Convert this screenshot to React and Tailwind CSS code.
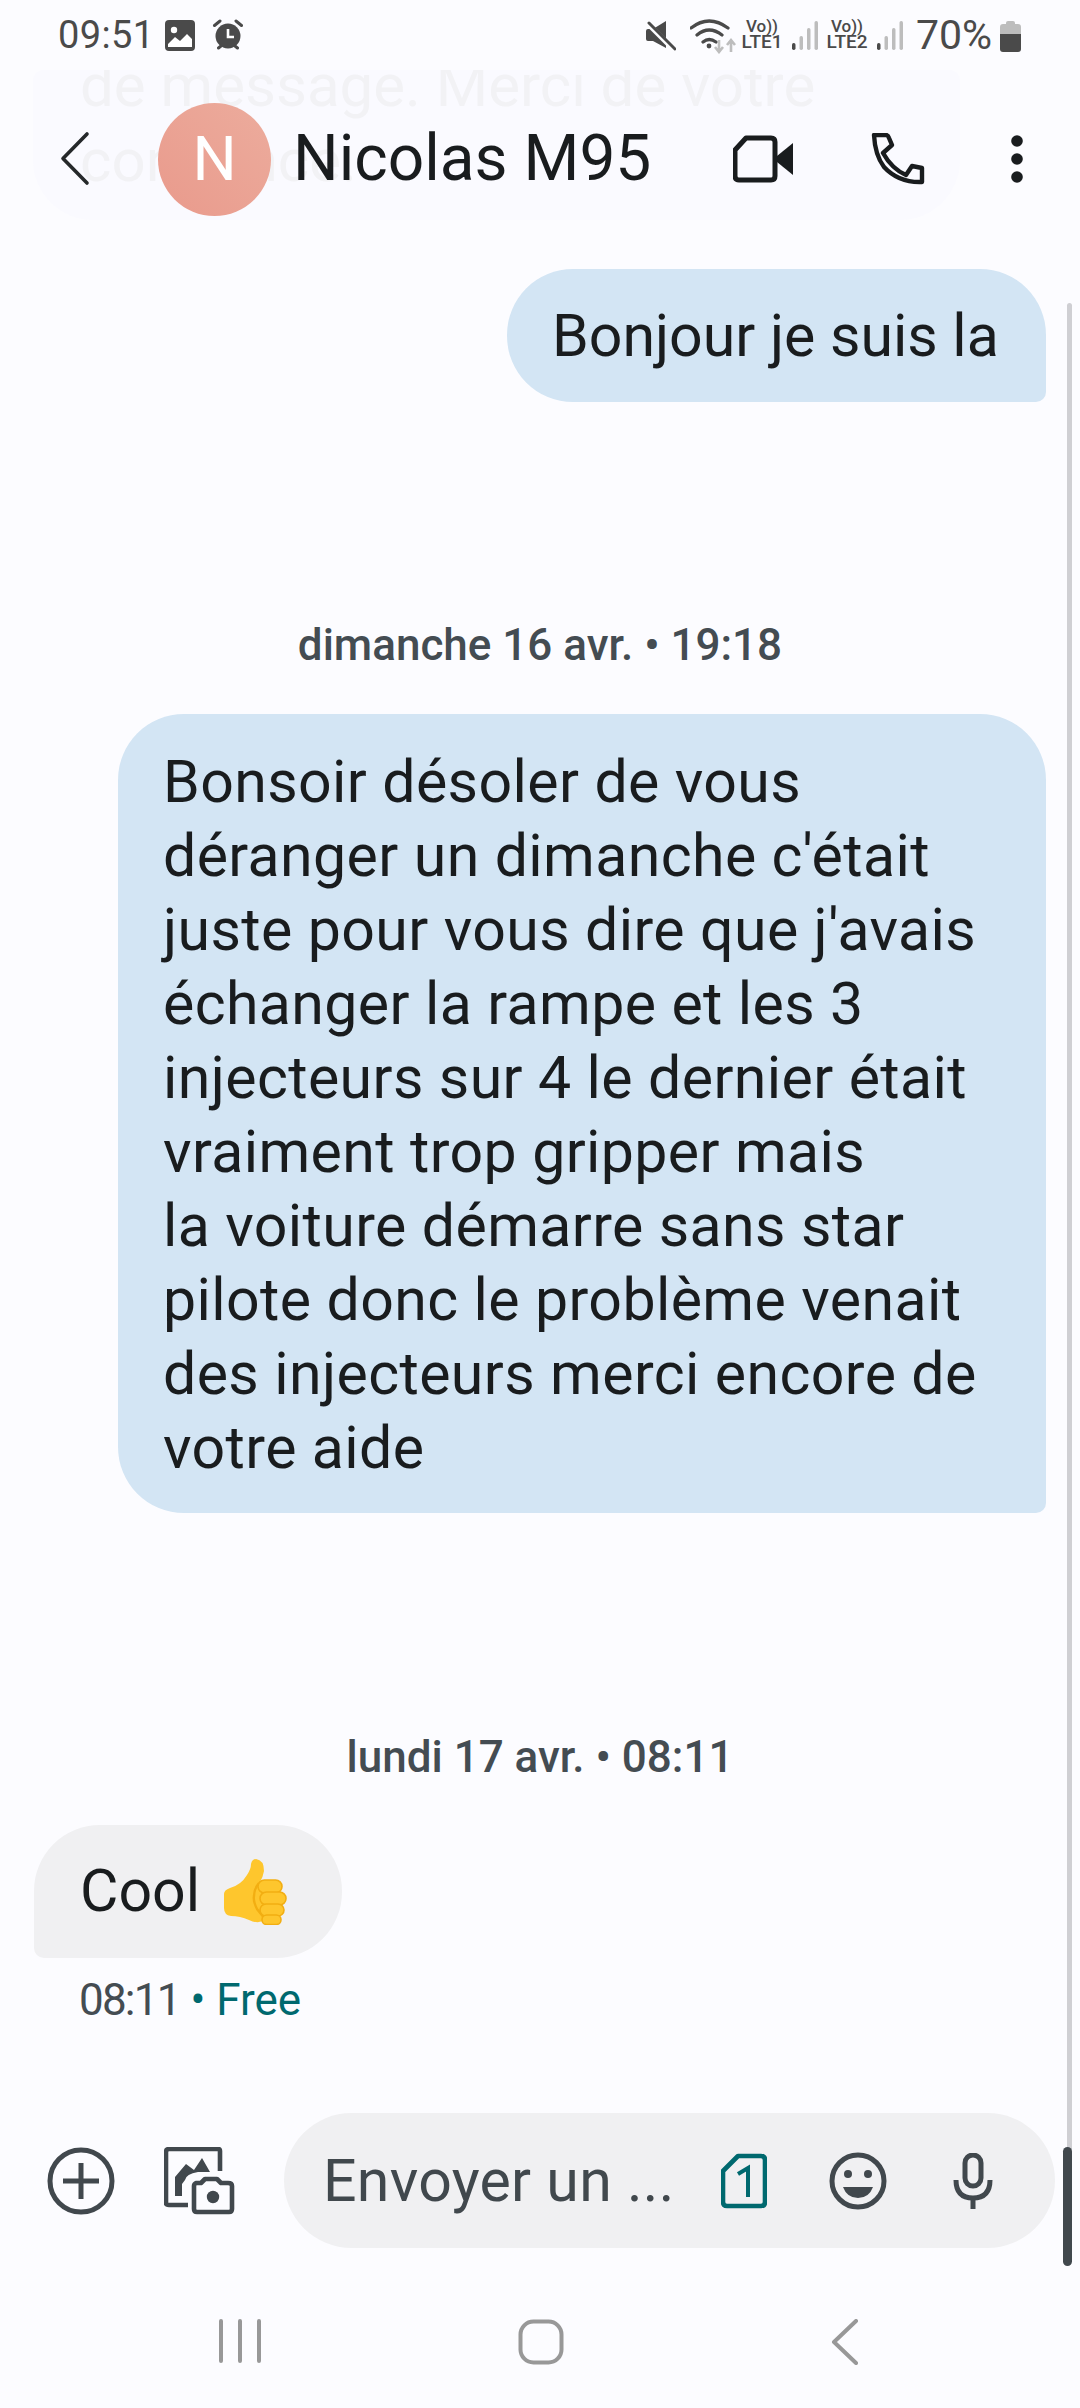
const font = { fontFamily: '"Roboto","Noto Sans",sans-serif' };

function Signal() {
  return (
    <svg width="26" height="30" viewBox="0 0 26 30" className="shrink-0">
      <rect x="0" y="22" width="3.5" height="7" rx="1.7" fill="#4a4a4a" />
      <rect x="7.5" y="15" width="3.5" height="14" rx="1.7" fill="#bdbdbd" />
      <rect x="15" y="7" width="3.5" height="22" rx="1.7" fill="#bdbdbd" />
      <rect x="22.5" y="0" width="3.5" height="29" rx="1.7" fill="#bdbdbd" />
    </svg>
  );
}

function Lte({ n }) {
  return (
    <div className="w-[40px] shrink-0 flex flex-col items-center text-[#4a4a4a] font-medium">
      <span className="text-[17px] leading-[15px] h-[15px]">Vo))</span>
      <span className="text-[19px] leading-[16px] h-[16px]">LTE{n}</span>
    </div>
  );
}

function StatusBar() {
  return (
    <div className="h-[70px] shrink-0 flex items-start pt-[18px] pl-[58px] pr-[59px] text-[#4a4a4a]">
      <span className="text-[38px] leading-[34px] w-[107px] shrink-0 tracking-[0.4px]">09:51</span>
      <svg width="30" height="31" viewBox="0 0 30 31" className="shrink-0 mt-[2px]">
        <rect width="30" height="31" rx="4" fill="#4a4a4a" />
        <circle cx="9" cy="10" r="3.2" fill="#fff" />
        <path d="M3 24 L10 17 L15 21 L22 14 L27 19 V27 H3 Z" fill="#fff" />
      </svg>
      <svg width="32" height="32" viewBox="0 0 32 32" className="shrink-0 ml-[17px] mt-[1px]">
        <circle cx="16" cy="17" r="12.5" fill="#4a4a4a" />
        <path d="M2.5 6.5 L8 2 M29.5 6.5 L24 2 M6.5 29 L9 27 M25.5 29 L23 27" stroke="#4a4a4a" strokeWidth="3" strokeLinecap="round" />
        <path d="M16 10 V18 H22" stroke="#fff" strokeWidth="2.6" fill="none" />
      </svg>
      <div className="flex-1" />
      <svg width="30" height="32" viewBox="0 0 30 32" className="shrink-0 mt-[2px]">
        <path d="M0 11 Q0 9 2 9 H7 L20 1 V28 L7 21 H2 Q0 21 0 19 Z" fill="#4a4a4a" />
        <path d="M1 3 L28 30" stroke="#fdfdff" strokeWidth="5" />
        <path d="M3 3 L29 29" stroke="#4a4a4a" strokeWidth="3" strokeLinecap="round" />
      </svg>
      <svg width="46" height="36" viewBox="0 0 46 36" className="shrink-0 ml-[14px]">
        <path d="M1 10 Q19 -4 38 10 M7 17 Q19 7 32 17 M13 24 Q19 19 26 24" stroke="#4a4a4a" strokeWidth="3.2" fill="none" strokeLinecap="round" />
        <circle cx="19" cy="28" r="2.4" fill="#4a4a4a" />
        <path d="M29 22 V33 M25 29 L29 34 L33 29" stroke="#bdbdbd" strokeWidth="2.6" fill="none" />
        <path d="M41 34 V23 M37 27 L41 22 L45 27" stroke="#bdbdbd" strokeWidth="2.6" fill="none" />
      </svg>
      <div className="ml-[6px] mt-[1px] flex gap-[10px]">
        <Lte n="1" />
        <div className="mt-[2px]"><Signal /></div>
      </div>
      <div className="ml-[9px] mt-[1px] flex gap-[10px]">
        <Lte n="2" />
        <div className="mt-[2px]"><Signal /></div>
      </div>
      <span className="text-[41px] leading-[34px] ml-[13px] w-[84px] shrink-0">70%</span>
      <svg width="21" height="32" viewBox="0 0 21 32" className="shrink-0 mt-[2px]">
        <path d="M6 3 Q6 1 8 1 H13 Q15 1 15 3 V4 H18 Q21 4 21 7 V14 H0 V7 Q0 4 3 4 H6 Z" fill="#bdbdbd" />
        <path d="M0 14 H21 V29 Q21 32 18 32 H3 Q0 32 0 29 Z" fill="#4a4a4a" />
      </svg>
    </div>
  );
}

function Header() {
  return (
    <div className="h-[150px] shrink-0 relative flex items-center pt-[28px] pl-[60px] text-[#191c1e]">
      <div className="absolute left-[33px] top-0 w-[927px] h-[150px] overflow-hidden rounded-t-[10px] rounded-b-[60px] bg-[#fafaff]">
        <div className="ml-[47px] mt-[-22px] text-[#f2f2f5] text-[60px] leading-[75px] whitespace-nowrap">
          de message. Merci de votre
          <br />
          confiance.
        </div>
      </div>
      <svg width="32" height="56" viewBox="0 0 32 56" className="shrink-0 relative">
        <path d="M27 3 L3 27.5 L27 52" stroke="#25282a" strokeWidth="3.6" fill="none" strokeLinecap="round" strokeLinejoin="round" />
      </svg>
      <div className="relative ml-[66px] w-[113px] h-[113px] rounded-full shrink-0 bg-linear-to-bl from-[#ecac9d] to-[#e99a8c] flex items-center justify-center text-white text-[62px] leading-none">
        N
      </div>
      <span className="relative ml-[22px] w-[440px] shrink-0 text-[64px] leading-[80px] whitespace-nowrap">Nicolas M95</span>
      <svg width="60" height="48" viewBox="0 0 60 48" className="shrink-0 relative">
        <path d="M13 3 H38 Q42 3 42 7 V41 Q42 45 38 45 H6 Q2 45 2 41 V15 Z" stroke="#191c1e" strokeWidth="5" fill="none" strokeLinejoin="round" />
        <path d="M44 21 L60 8 V40 L44 27 Z" fill="#191c1e" />
      </svg>
      <svg width="54" height="52" viewBox="0 0 54 52" className="shrink-0 ml-[78px] relative">
        <path d="M3 2 H15 Q17 2 18 5 L21 12 L12 20 Q21 36 35 42 L41 33 L51 35 V49 Q28 50 13 34 Q4 22 3 2 Z" stroke="#191c1e" strokeWidth="4.4" fill="none" strokeLinejoin="round" />
      </svg>
      <svg width="12" height="48" viewBox="0 0 12 48" className="shrink-0 ml-[86px] relative">
        <circle cx="6" cy="6" r="5.8" fill="#191c1e" />
        <circle cx="6" cy="24" r="5.8" fill="#191c1e" />
        <circle cx="6" cy="42" r="5.8" fill="#191c1e" />
      </svg>
    </div>
  );
}

function Thumb() {
  return (
    <svg width="64" height="66" viewBox="0 0 64 66" className="shrink-0">
      <path d="M1 35 Q1 31 7 29 Q18 26 24 16 Q28 10 28 5 Q29 0 33 0 Q41 1 41 12 Q40 18 37 23 L44 60 Q36 66 26 61 Q17 57 8 57 Q1 56 1 49 Z" fill="#fec62d" />
      <path d="M36 24 Q31 30 31 37 Q30 42 34 50 L42 60" stroke="#f2ae12" strokeWidth="2.4" fill="none" />
      <rect x="35" y="21" width="24" height="13" rx="6.5" fill="#fec62d" stroke="#f2ae12" strokeWidth="1.6" />
      <rect x="37" y="33" width="26" height="13" rx="6.5" fill="#fec62d" stroke="#f2ae12" strokeWidth="1.6" />
      <rect x="37" y="45" width="24" height="12" rx="6" fill="#fec62d" stroke="#f2ae12" strokeWidth="1.6" />
      <rect x="39" y="56" width="19" height="9.5" rx="4.7" fill="#fec62d" stroke="#f2ae12" strokeWidth="1.6" />
    </svg>
  );
}

function Composer() {
  return (
    <div className="flex items-center h-[135px] mt-auto pl-[47px] pr-[25px] text-[#41484d] shrink-0">
      <svg width="68" height="68" viewBox="0 0 68 68" className="shrink-0">
        <circle cx="34" cy="34" r="31" stroke="#41484d" strokeWidth="5" fill="none" />
        <path d="M34 16 V52 M16 34 H52" stroke="#41484d" strokeWidth="5" fill="none" />
      </svg>
      <svg width="72" height="68" viewBox="0 0 72 68" className="shrink-0 ml-[49px]">
        <path d="M56 24 V4 Q56 2 54 2 H5 Q2 2 2 5 V56 Q2 58 5 58 H24" stroke="#41484d" strokeWidth="4.6" fill="none" />
        <path d="M11 49 V30 L22 17 L30 23 L38 11 L46 25 H34 Q22 27 21 33 L18 37 V49 Z" fill="#41484d" />
        <path d="M30 39 Q30 37 32 36 H37 L41 32 H53 L57 36 H64 Q68 36 68 39 V62 Q68 65 65 65 H33 Q30 65 30 62 Z" stroke="#41484d" strokeWidth="4.6" fill="#fcfcff" strokeLinejoin="round" />
        <circle cx="49" cy="50" r="6.2" fill="#41484d" />
      </svg>
      <div className="ml-[48px] flex-1 h-[135px] rounded-full bg-[#f0f0f2] flex items-center pl-[39px]">
        <span className="text-[59px] tracking-[0.3px] leading-[70px] w-[398px] shrink-0 whitespace-nowrap">Envoyer un ...</span>
        <svg width="46" height="56" viewBox="0 0 46 56" className="shrink-0">
          <path d="M17 3 H40 Q44 3 44 7 V49 Q44 53 40 53 H6 Q2 53 2 49 V18 Z" stroke="#00696f" strokeWidth="4.6" fill="none" strokeLinejoin="round" />
          <path d="M17 21 L27 15 V44" stroke="#00696f" strokeWidth="4" fill="none" />
        </svg>
        <svg width="58" height="58" viewBox="0 0 58 58" className="shrink-0 ml-[62px]">
          <circle cx="29" cy="29" r="26" stroke="#41484d" strokeWidth="5" fill="none" />
          <circle cx="19" cy="22" r="4" fill="#41484d" />
          <circle cx="39" cy="22" r="4" fill="#41484d" />
          <path d="M14 35 H44 Q40 46 29 46 Q18 46 14 35 Z" fill="#41484d" />
        </svg>
        <svg width="40" height="56" viewBox="0 0 40 56" className="shrink-0 ml-[66px]">
          <rect x="12" y="2" width="16" height="31" rx="8" stroke="#41484d" strokeWidth="5" fill="none" />
          <path d="M3 27 Q3 45 20 45 Q37 45 37 27" stroke="#41484d" strokeWidth="5" fill="none" />
          <path d="M20 44 V56" stroke="#41484d" strokeWidth="5" />
        </svg>
      </div>
    </div>
  );
}

function NavBar() {
  return (
    <div className="h-[160px] shrink-0 relative flex items-start pt-[71px] pl-[218px] text-[#989898]">
      <svg width="44" height="44" viewBox="0 0 44 44" className="shrink-0">
        <path d="M3 2 V42 M22 2 V42 M41 2 V42" stroke="#989898" strokeWidth="4" strokeLinecap="round" />
      </svg>
      <svg width="46" height="46" viewBox="0 0 46 46" className="shrink-0 ml-[256px]">
        <rect x="2.5" y="2.5" width="41" height="41" rx="13" stroke="#989898" strokeWidth="4" fill="none" />
      </svg>
      <svg width="28" height="46" viewBox="0 0 28 46" className="shrink-0 ml-[267px]">
        <path d="M25 2 L3 23 L25 44" stroke="#989898" strokeWidth="4" fill="none" strokeLinecap="round" strokeLinejoin="round" />
      </svg>
    </div>
  );
}

export default function App() {
  return (
    <div className="w-[1080px] h-[2408px] relative overflow-hidden bg-[#fcfcff] flex flex-col" style={font}>
      <StatusBar />
      <Header />
      <div className="flex flex-col pt-[49px] text-[#191c1e]">
        <div className="self-end mr-[34px] w-[539px] h-[133px] rounded-[66px] rounded-br-[10px] bg-[#d3e5f4] flex items-center pl-[45px] text-[59px] leading-[74px] whitespace-nowrap">
          Bonjour je suis la
        </div>
        <div className="mt-[213px] h-[60px] text-center text-[44px] leading-[60px] font-medium text-[#444c52]">
          dimanche 16 avr. • 19:18
        </div>
        <div className="mt-[39px] self-end mr-[34px] w-[928px] h-[799px] rounded-[66px] rounded-br-[10px] bg-[#d3e5f4] pl-[45px] pt-[31px] text-[59px] tracking-[0.4px] leading-[74px] whitespace-nowrap">
          Bonsoir désoler de vous
          <br />
          déranger un dimanche c'était
          <br />
          juste pour vous dire que j'avais
          <br />
          échanger la rampe et les 3
          <br />
          injecteurs sur 4 le dernier était
          <br />
          vraiment trop gripper mais
          <br />
          la voiture démarre sans star
          <br />
          pilote donc le problème venait
          <br />
          des injecteurs merci encore de
          <br />
          votre aide
        </div>
        <div className="mt-[214px] h-[60px] text-center text-[44px] leading-[60px] font-medium text-[#444c52]">
          lundi 17 avr. • 08:11
        </div>
        <div className="mt-[38px] ml-[34px] self-start w-[308px] h-[133px] rounded-[66px] rounded-bl-[10px] bg-[#f0f0f2] flex items-center pl-[46px] text-[59px] whitespace-nowrap gap-[23px]">
          Cool
          <Thumb />
        </div>
        <div className="mt-[14px] ml-[79px] h-[56px] text-[44px] leading-[56px] text-[#444c52] whitespace-nowrap">
          <span className="tracking-[-1.8px]">08:11</span> <span className="text-[#00696f]">• Free</span>
        </div>
      </div>
      <Composer />
      <NavBar />
      <div className="absolute left-[1067px] top-[303px] w-[5px] h-[1850px] rounded-t-[3px] bg-[#cfcfd3]" />
      <div className="absolute left-[1063px] top-[2147px] w-[9px] h-[119px] rounded-full bg-[#41484d]" />
    </div>
  );
}
